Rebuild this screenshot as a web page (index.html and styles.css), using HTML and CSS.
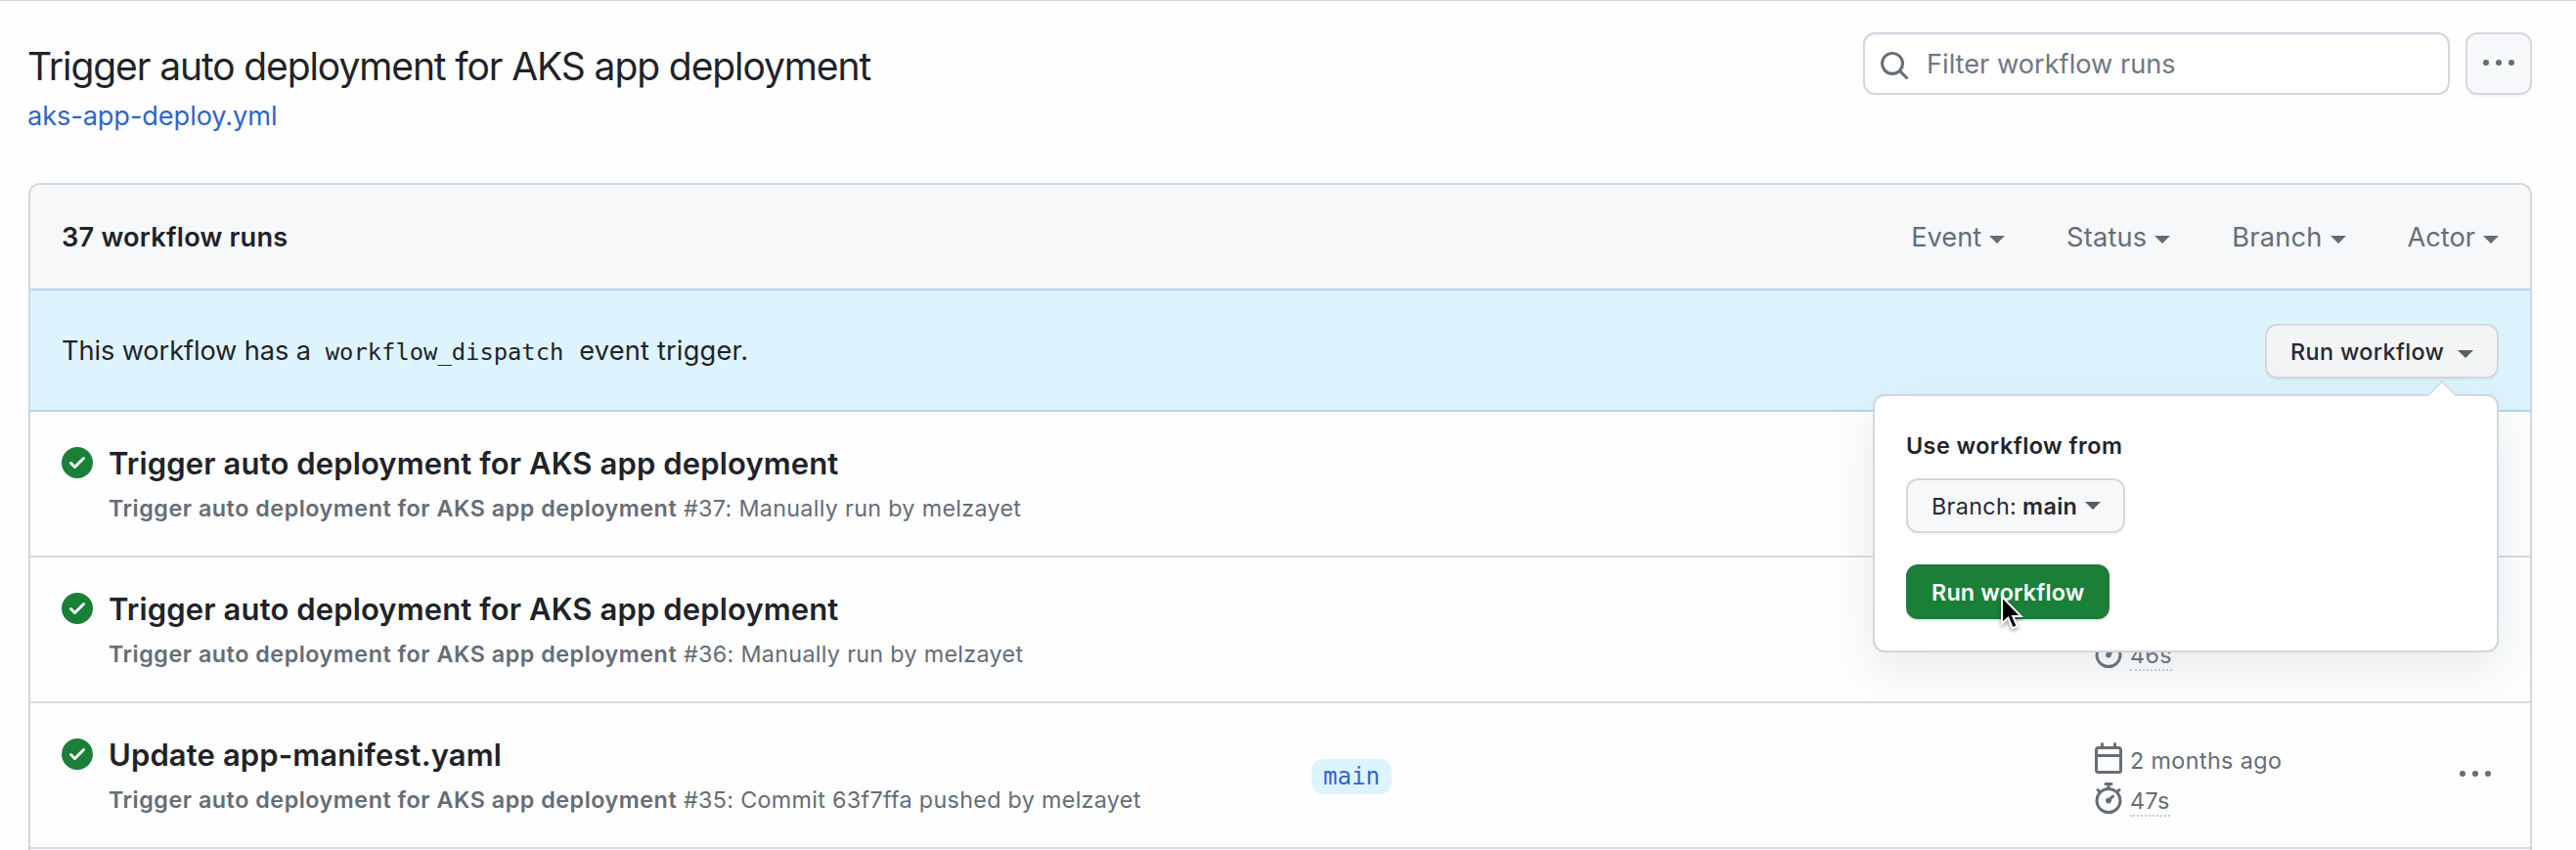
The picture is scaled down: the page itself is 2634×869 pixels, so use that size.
FILE: index.html
```html
<!DOCTYPE html>
<html lang="en">
<head>
<meta charset="utf-8">
<title>Workflow runs</title>
<link rel="stylesheet" href="styles.css">
</head>
<body>
<svg class="sprite" aria-hidden="true">
  <symbol id="kebab" viewBox="0 0 16 16"><path d="M8 9a1.5 1.5 0 1 0 0-3 1.5 1.5 0 0 0 0 3ZM1.5 9a1.5 1.5 0 1 0 0-3 1.5 1.5 0 0 0 0 3Zm13 0a1.5 1.5 0 1 0 0-3 1.5 1.5 0 0 0 0 3Z"/></symbol>
  <symbol id="search" viewBox="0 0 16 16"><path d="M10.68 11.74a6 6 0 0 1-7.922-8.982 6 6 0 0 1 8.982 7.922l3.04 3.04a.749.749 0 0 1-.326 1.275.749.749 0 0 1-.734-.215ZM11.5 7a4.499 4.499 0 1 0-8.997 0A4.499 4.499 0 0 0 11.5 7Z"/></symbol>
  <symbol id="check" viewBox="0 0 16 16"><path d="M8 16A8 8 0 1 1 8 0a8 8 0 0 1 0 16Zm3.78-9.72a.751.751 0 0 0-.018-1.042.751.751 0 0 0-1.042-.018L6.75 9.19 5.28 7.72a.751.751 0 0 0-1.042.018.751.751 0 0 0-.018 1.042l2 2a.75.75 0 0 0 1.06 0Z"/></symbol>
  <symbol id="calendar" viewBox="0 0 16 16"><path d="M4.75 0a.75.75 0 0 1 .75.75V2h5V.75a.75.75 0 0 1 1.5 0V2h1.25c.966 0 1.75.784 1.75 1.75v10.5A1.75 1.75 0 0 1 13.25 16H2.75A1.75 1.75 0 0 1 1 14.25V3.75C1 2.784 1.784 2 2.75 2H4V.75A.75.75 0 0 1 4.75 0ZM2.5 7.5v6.75c0 .138.112.25.25.25h10.5a.25.25 0 0 0 .25-.25V7.5Zm10.75-4H2.75a.25.25 0 0 0-.25.25V6h11V3.75a.25.25 0 0 0-.25-.25Z"/></symbol>
  <symbol id="stopwatch" viewBox="0 0 16 16"><path d="M5.75.75A.75.75 0 0 1 6.5 0h3a.75.75 0 0 1 0 1.5h-.75v1l-.001.041a6.724 6.724 0 0 1 3.464 1.435l.007-.006.75-.75a.749.749 0 0 1 1.275.326.749.749 0 0 1-.215.734l-.75.75-.006.007a6.75 6.75 0 1 1-10.548 0L2.72 5.03l-.75-.75a.751.751 0 0 1 .018-1.042.751.751 0 0 1 1.042-.018l.75.75.007.006A6.72 6.72 0 0 1 7.25 2.541V1.5H6.5a.75.75 0 0 1-.75-.75ZM8 14.5a5.25 5.25 0 1 0-.001-10.501A5.25 5.25 0 0 0 8 14.5Zm.389-6.7 1.33-1.33a.75.75 0 1 1 1.061 1.06L9.45 8.861A1.503 1.503 0 0 1 8 10.75a1.499 1.499 0 1 1 .389-2.95Z"/></symbol>
</svg>

<header class="page-head">
  <div class="page-title">
    <h1>Trigger auto deployment for AKS app deployment</h1>
    <a class="file-link">aks-app-deploy.yml</a>
  </div>
  <div class="tools">
    <div class="search"><svg class="icon"><use href="#search"/></svg><span>Filter workflow runs</span></div>
    <div class="kebab-btn"><svg class="icon"><use href="#kebab"/></svg></div>
  </div>
</header>

<main class="box">
  <div class="box-head">
    <strong class="count">37 workflow runs</strong>
    <nav class="filters">
      <span class="filter">Event<i class="caret"></i></span>
      <span class="filter wide">Status<i class="caret"></i></span>
      <span class="filter wide">Branch<i class="caret"></i></span>
      <span class="filter">Actor<i class="caret"></i></span>
    </nav>
  </div>

  <div class="banner">
    <p class="banner-text"><span class="lead">This workflow has a</span> <code>workflow_dispatch</code> event trigger.</p>
    <div class="dispatch">
      <div class="btn btn-open">Run workflow<i class="caret"></i></div>
      <div class="popover">
        <svg class="tip" viewBox="0 0 28 16"><path class="tip-fill" d="M0 16 14 1 28 16Z"/><path class="tip-line" d="M0.5 14.5 14 1 27.5 14.5"/></svg>
        <strong class="popover-title">Use workflow from</strong>
        <div class="btn btn-branch"><span>Branch:</span> <b>main</b><i class="caret"></i></div>
        <div class="btn btn-primary">Run workflow</div>
        <svg class="cursor" viewBox="0 0 24 38"><path d="M2 2V29.5L8.3 23.8 12.8 34.2 17.6 32.1 13.2 22H21.6Z"/></svg>
      </div>
    </div>
  </div>

  <div class="run">
    <svg class="icon check"><use href="#check"/></svg>
    <div class="run-main">
      <div class="run-title">Trigger auto deployment for AKS app deployment</div>
      <div class="run-sub"><b>Trigger auto deployment for AKS app deployment</b> #37: Manually run by melzayet</div>
    </div>
  </div>

  <div class="run">
    <svg class="icon check"><use href="#check"/></svg>
    <div class="run-main">
      <div class="run-title">Trigger auto deployment for AKS app deployment</div>
      <div class="run-sub"><b>Trigger auto deployment for AKS app deployment</b> #36: Manually run by melzayet</div>
    </div>
    <div class="run-label"></div>
    <div class="run-meta">
      <div class="meta"></div>
      <div class="meta"><svg class="icon"><use href="#stopwatch"/></svg><span class="duration">46s</span></div>
    </div>
  </div>

  <div class="run">
    <svg class="icon check"><use href="#check"/></svg>
    <div class="run-main">
      <div class="run-title">Update app-manifest.yaml</div>
      <div class="run-sub"><b>Trigger auto deployment for AKS app deployment</b> #35: Commit 63f7ffa pushed by melzayet</div>
    </div>
    <div class="run-label"><span class="branch">main</span></div>
    <div class="run-meta">
      <div class="meta"><svg class="icon"><use href="#calendar"/></svg><span>2 months ago</span></div>
      <div class="meta"><svg class="icon"><use href="#stopwatch"/></svg><span class="duration">47s</span></div>
    </div>
    <svg class="icon run-menu"><use href="#kebab"/></svg>
  </div>
</main>
</body>
</html>
```
FILE: styles.css
```css
* { box-sizing: border-box; }

body {
  margin: 0;
  height: 869px;
  overflow: hidden;
  border-top: 1px solid #d8dae0;
  background: #fefefe;
  color: #1f2328;
  font: 27.2px/42px Inter, "Liberation Sans", sans-serif;
}

.sprite { display: none; }

.icon {
  display: block;
  flex: none;
  width: 32px;
  height: 32px;
  fill: #656d76;
}

.caret {
  display: inline-block;
  width: 0;
  height: 0;
  border: 8px solid transparent;
  border-top-color: currentColor;
  border-bottom: 0;
}

/* Page heading */
.page-head {
  display: flex;
  justify-content: space-between;
  align-items: flex-start;
  height: 186px;
  padding: 32px 45px 0 28px;
}

.page-title { padding-top: 4px; }

h1 {
  margin: 0;
  font-size: 39px;
  font-weight: 400;
  line-height: 61px;
  letter-spacing: -1.1px;
}

.file-link {
  display: block;
  color: #2d66ca;
  letter-spacing: -.1px;
}

.tools {
  display: flex;
  gap: 16px;
}

.search {
  display: flex;
  align-items: center;
  width: 600px;
  height: 64px;
  padding-left: 14px;
  border: 2px solid #d0d7de;
  border-radius: 12px;
  background: #fff;
  box-shadow: inset 0 2px 0 rgba(208, 215, 222, .2);
  color: #6e7781;
}

.search span { margin: 2px 0 0 17px; }
.search .icon { margin-top: 4px; }

.kebab-btn {
  display: grid;
  place-items: center;
  width: 68px;
  height: 64px;
  border: 2px solid #d5d9de;
  border-radius: 12px;
  background: #f6f8fa;
  box-shadow: 0 2px 0 rgba(31, 35, 40, .04);
}

/* Run list */
.box {
  width: 2560px;
  height: 682px;
  margin-left: 29px;
  border: 2px solid #d0d7de;
  border-bottom: 0;
  border-radius: 12px 12px 0 0;
}

.box-head {
  display: flex;
  justify-content: space-between;
  align-items: center;
  height: 106px;
  padding: 1px 32px 0;
  border-radius: 10px 10px 0 0;
  background: #f6f8fa;
}

.count {
  font-weight: 600;
  letter-spacing: .22px;
}

.filters {
  display: flex;
  gap: 63px;
  color: #656d76;
}

.filter {
  display: flex;
  align-items: center;
}

.wide { letter-spacing: .2px; }

.filter .caret { margin: 5px 0 0 8px; }

.banner {
  display: flex;
  justify-content: space-between;
  height: 126px;
  padding: 32px;
  border-top: 2px solid #afd6ef;
  border-bottom: 2px solid #afd6ef;
  background: #ddf4ff;
}

.banner-text {
  margin: 0;
  line-height: 60px;
  letter-spacing: .2px;
}

.lead { letter-spacing: -.1px; }

code {
  padding: 0 8px 0 7px;
  font: 23.8px "DejaVu Sans Mono", monospace;
  letter-spacing: 0;
}

.dispatch {
  position: relative;
  padding-top: 2px;
}

.btn {
  display: flex;
  align-items: center;
  width: max-content;
  height: 56px;
  padding: 1px 24px 0;
  border: 2px solid #d5d8dc;
  border-radius: 12px;
  background: #f6f8fa;
  box-shadow: 0 2px 0 rgba(31, 35, 40, .04);
  color: #24292f;
  font-size: 23.3px;
  font-weight: 500;
  letter-spacing: .4px;
  white-space: nowrap;
}

.btn .caret { border-top-color: #5a5d62; }

.btn-open {
  width: 239px;
  background: #f3f4f6;
}

.btn-open .caret { margin: 5px 0 0 14px; }

/* Dispatch form */
.popover {
  position: absolute;
  z-index: 1;
  top: 74px;
  right: 0;
  width: 640px;
  height: 264px;
  padding: 33px 32px;
  border: 2px solid #d0d7de;
  border-radius: 12px;
  background: #fff;
  box-shadow: 0 16px 48px rgba(140, 149, 159, .2);
}

.tip {
  position: absolute;
  top: -16px;
  right: 42px;
  width: 28px;
  height: 16px;
}

.tip-fill { fill: #fff; }

.tip-line {
  fill: none;
  stroke: #d0d7de;
  stroke-width: 1.5;
}

.popover-title {
  display: block;
  font-size: 23.3px;
  font-weight: 600;
  line-height: 36px;
  letter-spacing: .48px;
}

.btn-branch {
  width: 224px;
  margin-top: 15px;
  font-weight: 400;
  letter-spacing: .35px;
}

.btn-branch b {
  margin-left: 6px;
  font-weight: 600;
}

.btn-branch .caret { margin: -1px 0 0 8px; }

.btn-primary {
  width: 208px;
  margin-top: 32px;
  border-color: #23773b;
  background: #1a7f37;
  box-shadow: 0 2px 0 rgba(31, 136, 61, .12);
  color: #fff;
  font-weight: 600;
  letter-spacing: .18px;
}

.cursor {
  position: absolute;
  top: 203px;
  left: 128px;
  width: 24px;
  height: 38px;
  fill: #000;
  stroke: #fff;
  stroke-width: 2;
  filter: drop-shadow(0 2px 2px rgba(0, 0, 0, .4));
}

/* Rows */
.run {
  display: grid;
  grid-template-columns: 48px 1230px 799px 375px auto;
  height: 149px;
  padding: 0 32px;
  border-bottom: 2px solid #d8dbe1;
}

.check {
  margin-top: 36px;
  fill: #1a7f37;
}

.run-main { padding-top: 33px; }

.run-title {
  font-size: 31px;
  font-weight: 600;
  line-height: 40px;
  letter-spacing: .12px;
}

.run-sub {
  padding-top: 8px;
  color: #656d76;
  font-size: 23.3px;
  line-height: 36px;
  letter-spacing: .32px;
}

.run-sub b {
  font-weight: 600;
  letter-spacing: .53px;
}

.run-label { padding-top: 57px; }

.branch {
  display: block;
  width: 82px;
  height: 36px;
  border-radius: 12px;
  background: #ddf4ff;
  color: #2d66ca;
  font: 24px/36px "DejaVu Sans Mono", monospace;
  text-align: center;
}

.run-meta { padding-top: 40px; }

.meta {
  display: flex;
  height: 41px;
  color: #656d76;
  font-size: 23.3px;
  line-height: 37px;
  letter-spacing: .4px;
}

.meta span { margin-left: 6px; }

.duration {
  height: 35px;
  border-bottom: 2px dotted #c6cbd1;
}

.run-menu { margin-top: 57px; }
```
